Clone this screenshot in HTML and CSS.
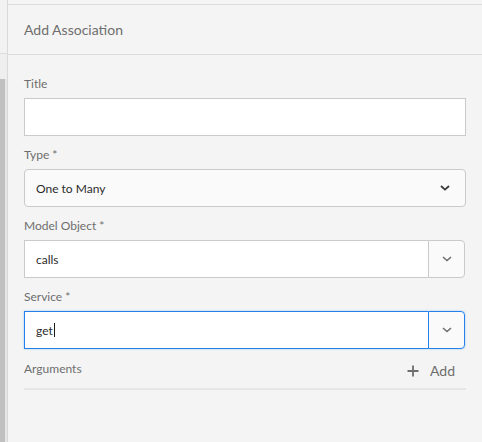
FILE: index.html
```html
<!DOCTYPE html>
<html lang="en">
<head>
<meta charset="utf-8">
<title>Add Association</title>
<link rel="stylesheet" href="styles.css">
</head>
<body>
<div class="app">
  <div class="rail">
    <div class="rail-top"></div>
    <div class="rail-gap"></div>
    <div class="rail-scroll">
      <div class="thumb"></div>
      <div class="track"></div>
    </div>
  </div>
  <div class="panel">
    <div class="panel-header">Add Association</div>
    <div class="form">
      <div class="field">
        <div class="label">Title</div>
        <div class="textbox"></div>
      </div>
      <div class="field">
        <div class="label">Type *</div>
        <div class="select">
          <span class="value">One to Many</span>
          <svg class="chev dark" width="10" height="6" viewBox="0 0 10 6"><path d="M1 1 L5 4.6 L9 1" fill="none" stroke="#3b3b3b" stroke-width="1.8"/></svg>
        </div>
      </div>
      <div class="field">
        <div class="label">Model Object *</div>
        <div class="combo">
          <div class="combo-input"><span class="value">calls</span></div>
          <div class="combo-btn">
            <svg class="chev" width="10" height="6" viewBox="0 0 10 6"><path d="M1 1 L5 4.6 L9 1" fill="none" stroke="#6e6e6e" stroke-width="1.5"/></svg>
          </div>
        </div>
      </div>
      <div class="field">
        <div class="label">Service *</div>
        <div class="combo focused">
          <div class="combo-input"><span class="value">get</span><span class="caret"></span></div>
          <div class="combo-btn">
            <svg class="chev" width="10" height="6" viewBox="0 0 10 6"><path d="M1 1 L5 4.6 L9 1" fill="none" stroke="#6e6e6e" stroke-width="1.5"/></svg>
          </div>
        </div>
      </div>
      <div class="args-row">
        <div class="label args-label">Arguments</div>
        <div class="add-btn">
          <svg width="12" height="12" viewBox="0 0 12 12"><path d="M6 0.5 V11.5 M0.5 6 H11.5" stroke="#6e6e6e" stroke-width="1.8" fill="none"/></svg>
          <span>Add</span>
        </div>
      </div>
      <div class="divider"></div>
    </div>
  </div>
</div>
</body>
</html>
```

FILE: styles.css
```css
html, body {
  margin: 0;
  padding: 0;
  height: 100%;
}
body {
  background: #f4f4f4;
  font-family: Lato, "Open Sans", "Liberation Sans", sans-serif;
  overflow: hidden;
}
.app {
  display: flex;
  height: 442px;
}
.rail {
  width: 7px;
  border-right: 1px solid #d9d9d9;
  display: flex;
  flex-direction: column;
  background: #efefef;
}
.rail-top {
  height: 53px;
  background: #f2f2f2;
  border-bottom: 1px solid #dcdcdc;
}
.rail-gap {
  height: 25px;
}
.rail-scroll {
  flex: 1;
  display: flex;
}
.thumb {
  width: 5px;
  background: #c0c0c0;
}
.track {
  flex: 1;
  background: #e6e6e6;
}
.panel {
  flex: 1;
  margin-top: 4px;
  border-top: 1px solid #dcdcdc;
  display: flex;
  flex-direction: column;
}
.panel-header {
  box-sizing: border-box;
  height: 50px;
  border-bottom: 1px solid #dcdcdc;
  padding-left: 16px;
  display: flex;
  align-items: center;
  font-size: 14px;
  color: #6e6e6e;
}
.form {
  padding: 20px 16px 0 16px;
  display: flex;
  flex-direction: column;
}
.field {
  display: flex;
  flex-direction: column;
  margin-bottom: 10px;
}
.label {
  font-size: 12px;
  line-height: 18px;
  color: #6e6e6e;
  margin-bottom: 5px;
}
.textbox {
  height: 38px;
  box-sizing: border-box;
  background: #fff;
  border: 1px solid #cacaca;
}
.value {
  font-size: 12px;
  color: #2c2c2c;
}
.select {
  height: 38px;
  box-sizing: border-box;
  background: #fafafa;
  border: 1px solid #cacaca;
  border-radius: 4px;
  display: flex;
  align-items: center;
  justify-content: space-between;
  padding: 0 15px 0 11px;
}
.combo {
  height: 38px;
  display: flex;
  margin-right: 1px;
}
.combo-input {
  flex: 1;
  box-sizing: border-box;
  background: #fff;
  border: 1px solid #cacaca;
  border-right: none;
  display: flex;
  align-items: center;
  padding-left: 11px;
}
.combo-btn {
  width: 37px;
  box-sizing: border-box;
  background: #fafafa;
  border: 1px solid #cacaca;
  border-radius: 0 4px 4px 0;
  display: flex;
  align-items: center;
  justify-content: center;
}
.combo.focused {
  box-shadow: 0 0 2px rgba(38, 128, 235, 0.45);
  border-radius: 0 4px 4px 0;
}
.combo.focused .combo-input,
.combo.focused .combo-btn {
  border-color: #2680eb;
}
.caret {
  display: inline-block;
  width: 1px;
  height: 14px;
  background: #1a1a1a;
  margin-left: 1px;
}
.args-row {
  display: flex;
  justify-content: space-between;
  align-items: flex-start;
  height: 29px;
}
.args-label {
  margin: 1px 0 0 0;
}
.add-btn {
  display: flex;
  align-items: center;
  gap: 11px;
  margin: 3px 11px 0 0;
  font-size: 14px;
  line-height: 18px;
  color: #6e6e6e;
}
.divider {
  height: 2px;
  background: #e6e6e6;
}
```
